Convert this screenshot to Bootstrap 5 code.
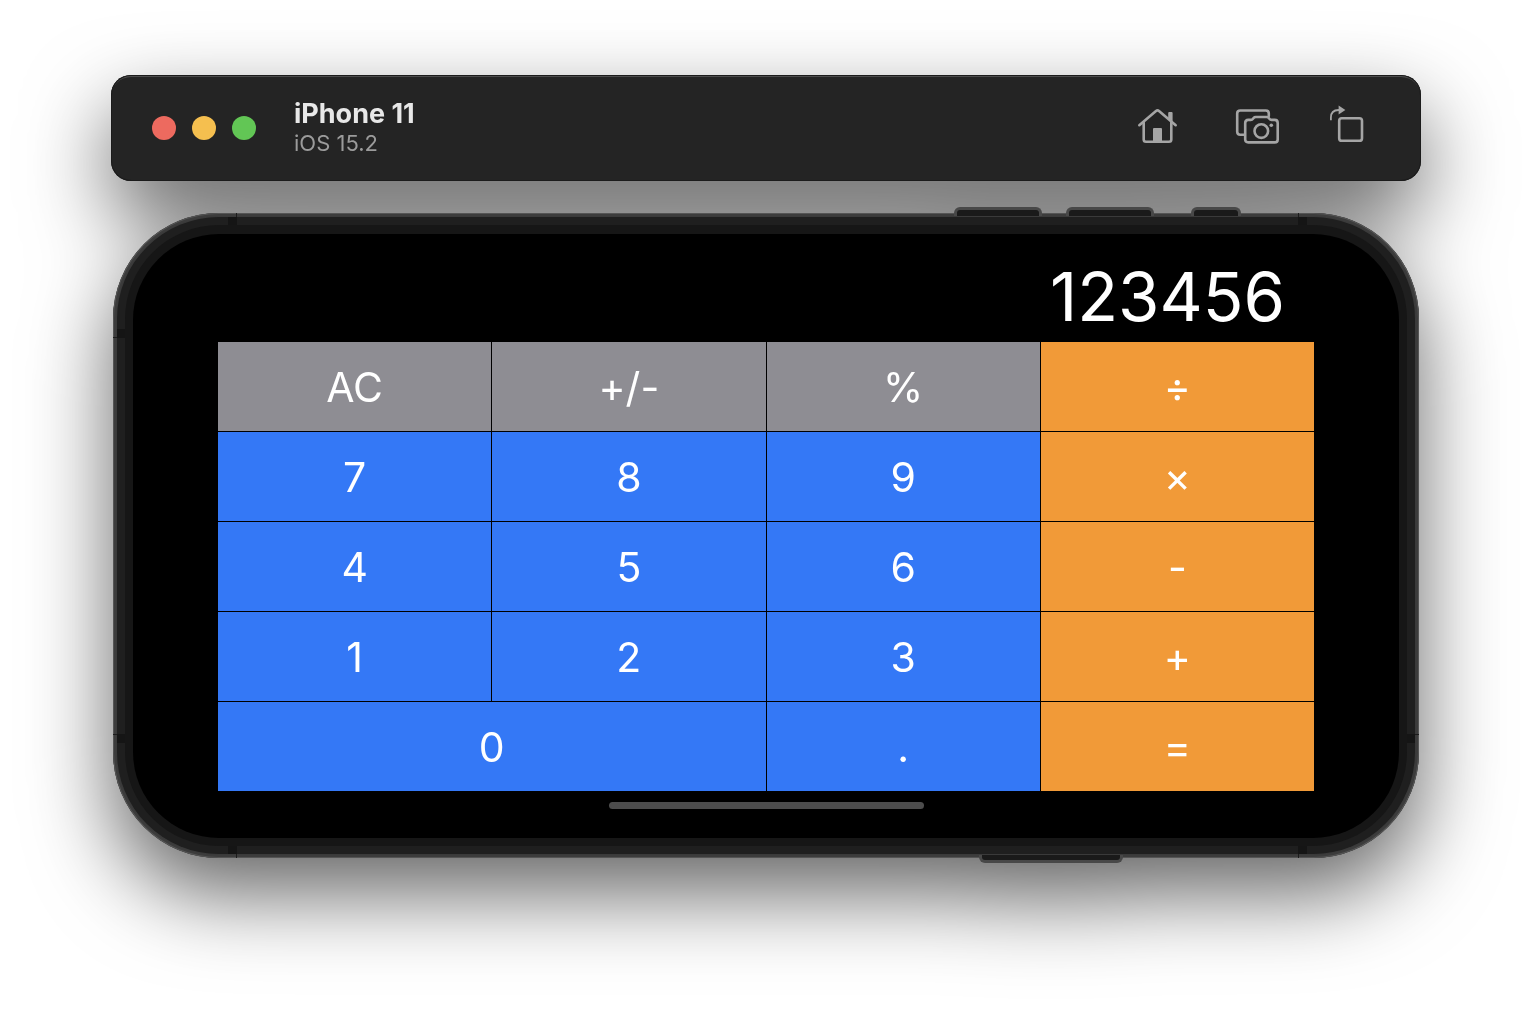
<!DOCTYPE html>
<html lang="en">
<head>
<meta charset="utf-8">
<meta name="viewport" content="width=device-width, initial-scale=1">
<title>iPhone 11 – iOS 15.2</title>
<link href="https://cdn.jsdelivr.net/npm/bootstrap@5.3.0/dist/css/bootstrap.min.css" rel="stylesheet">
<style>
  body { font-family: Inter, "Liberation Sans", sans-serif; background: #fff; }
  .simulator { max-width: 1358px; padding: 75px 24px 160px; filter: drop-shadow(0 36px 42px rgba(0, 0, 0, .6)); }

  .titlebar { min-height: 106px; padding: 0 45px 0 41px; background: #242424; border-radius: 20px;
    box-shadow: inset 0 0 0 1px #1b1b1b, inset 0 2px 0 #4c4c4c; }
  .lights { gap: 16px; margin-right: 38px; }
  .light { width: 24px; height: 24px; }
  .light-close { background: #ed6a5f; }
  .light-min { background: #f5bf4f; }
  .light-zoom { background: #62c655; }
  .device-name { font-size: 27px; line-height: 30px; color: #e8e8e8; }
  .device-os { font-size: 22px; line-height: 28px; color: #9b9b9b; }
  .tools { gap: 48px; }
  .tool { color: #a5a5a5; }
  .tool svg { display: block; width: 48px; height: 48px; fill: none; stroke: currentColor; stroke-width: 2.6; stroke-linecap: round; stroke-linejoin: round; }
  .tool .solid { fill: currentColor; stroke: none; }

  .phone { margin: 32px 2px 0; padding: 4px; background: #3a3a3a; border-radius: 106px;
    box-shadow: inset 0 0 0 1px #555, inset 0 0 0 3px #3c3c3c; }
  .frame { padding: 8px; background: #1f1f1f; border-radius: 102px; }
  .bezel { padding: 9px 8px 8px; background: #161616; border-radius: 94px; }
  .screen { padding: 0 85px 29px; background: #000; border-radius: 86px; }

  .readout { padding: 17px 29px 0 0; font-size: 67px; line-height: 91px; color: #fff; }
  .keypad { grid-template-columns: repeat(4, 1fr); grid-auto-rows: 89px; gap: 1px; }
  .key { --bs-btn-color: #fff; --bs-btn-hover-color: #fff; --bs-btn-active-color: #fff; font-size: 41px; line-height: 48px;
    --bs-btn-bg: #3478f6; --bs-btn-hover-bg: #4a87f8; --bs-btn-active-bg: #2a66d8; }
  .key-fn { --bs-btn-bg: #8e8d93; --bs-btn-hover-bg: #9d9ca2; --bs-btn-active-bg: #7b7a80; }
  .key-op { --bs-btn-bg: #f19a38; --bs-btn-hover-bg: #f5a850; --bs-btn-active-bg: #d98527; }
  .key-zero { grid-column: span 2; }
  .home-bar { width: 315px; height: 7px; margin-top: 11px; background: #4d4d4d; }

  /* hardware buttons sit on the rim of the phone */
  .rim { position: absolute; background: #1a1a1a; border: 3px solid #484848; }
  .rim-top { top: -6px; height: 9px; border-bottom: 0; border-radius: 6px 6px 0 0; }
  .rim-bottom { bottom: -5px; height: 8px; border-top: 0; border-radius: 0 0 6px 6px; }
  .vol-down { right: 377px; width: 88px; }
  .vol-up { right: 265px; width: 88px; }
  .mute { right: 178px; width: 50px; }
  .power { right: 296px; width: 144px; }
  /* antenna breaks in the metal band, each with a seam across the rim */
  .antenna { position: absolute; background: #151515; }
  .antenna::after { content: ""; position: absolute; background: #1c1c1c; }
  .antenna-v { width: 9px; height: 8px; }
  .antenna-v::after { width: 1px; height: 4px; }
  .antenna-h { width: 8px; height: 9px; }
  .antenna-h::after { width: 4px; height: 1px; }
  .at-top { top: 4px; }
  .at-top::after { top: -4px; }
  .at-bottom { bottom: 4px; }
  .at-bottom::after { bottom: -4px; }
  .at-left { left: 4px; }
  .at-left::after { left: -4px; }
  .at-right { right: 4px; }
  .at-right::after { right: -4px; }
  .from-left { left: 115px; }
  .from-left::after { right: 0; }
  .from-right { right: 112px; }
  .from-right::after { left: 0; }
  .from-top { top: 116px; }
  .from-top::after { bottom: 0; }
  .from-bottom { bottom: 115px; }
  .from-bottom::after { top: 0; }
</style>
</head>
<body>
<main class="simulator container-fluid">
  <header class="titlebar d-flex align-items-center">
    <div class="lights d-flex">
      <button type="button" class="light light-close btn p-0 border-0 rounded-circle" aria-label="Close"></button>
      <button type="button" class="light light-min btn p-0 border-0 rounded-circle" aria-label="Minimize"></button>
      <button type="button" class="light light-zoom btn p-0 border-0 rounded-circle" aria-label="Zoom"></button>
    </div>
    <div class="me-auto">
      <h1 class="device-name fw-bold m-0">iPhone 11</h1>
      <p class="device-os m-0">iOS 15.2</p>
    </div>
    <div class="tools d-flex">
      <button type="button" class="tool btn p-0 border-0" aria-label="Home">
        <svg viewBox="0 0 48 48" aria-hidden="true">
          <path d="M3.3 21.2 20 6.9q1.5-1.2 3 0L39.7 21.2"/>
          <path d="M7.7 18.5V35.5q0 2.3 2.3 2.3H33q2.3 0 2.3-2.3V18.5"/>
          <path class="solid" d="M32.2 14V9q0-1 1-1h2.4q1 0 1 1v9zM17 38V25q0-1 1-1h7q1 0 1 1v13z"/>
        </svg>
      </button>
      <button type="button" class="tool btn p-0 border-0" aria-label="Screenshot">
        <svg viewBox="0 0 48 48" aria-hidden="true">
          <path d="M12 30.8H8.2q-3 0-3-3V9.5q0-3 3-3H33.8q3 0 3 3V12"/>
          <path d="M16.2 15.9h2.6q1.4 0 2.2-1.1l.6-.8q.8-1 2.2-1h10.8q1.4 0 2.2 1l.6.8q.8 1.1 2.2 1.1h3.1q3 0 3 3V35.4q0 3-3 3H16.2q-3 0-3-3V18.9q0-3 3-3z"/>
          <circle cx="29.3" cy="27.1" r="6.8"/>
          <circle class="solid" cx="39.3" cy="21.2" r="1.8"/>
        </svg>
      </button>
      <button type="button" class="tool btn p-0 border-0" aria-label="Rotate">
        <svg viewBox="0 0 48 48" aria-hidden="true">
          <rect x="11.2" y="14.2" width="22.8" height="22.6" rx="2.6"/>
          <path stroke-width="1.8" stroke-linecap="butt" d="M2.9 16.3V13.6Q2.9 6 10.6 6H12"/>
          <path class="solid" d="M10.6 1.4 17.4 5.9 10.6 10.6z"/>
        </svg>
      </button>
    </div>
  </header>

  <section class="phone position-relative" aria-label="Calculator">
    <span class="rim rim-top vol-down"></span>
    <span class="rim rim-top vol-up"></span>
    <span class="rim rim-top mute"></span>
    <span class="rim rim-bottom power"></span>
    <div class="frame">
      <span class="antenna antenna-v at-top from-left"></span>
      <span class="antenna antenna-v at-top from-right"></span>
      <span class="antenna antenna-v at-bottom from-left"></span>
      <span class="antenna antenna-v at-bottom from-right"></span>
      <span class="antenna antenna-h at-left from-top"></span>
      <span class="antenna antenna-h at-left from-bottom"></span>
      <span class="antenna antenna-h at-right from-bottom"></span>
      <div class="bezel">
        <div class="screen">
          <output class="readout d-block text-end">123456</output>
          <div class="keypad d-grid">
            <button type="button" class="key key-fn btn p-0 border-0 rounded-0">AC</button>
            <button type="button" class="key key-fn btn p-0 border-0 rounded-0">+/-</button>
            <button type="button" class="key key-fn btn p-0 border-0 rounded-0">%</button>
            <button type="button" class="key key-op btn p-0 border-0 rounded-0">÷</button>
            <button type="button" class="key btn p-0 border-0 rounded-0">7</button>
            <button type="button" class="key btn p-0 border-0 rounded-0">8</button>
            <button type="button" class="key btn p-0 border-0 rounded-0">9</button>
            <button type="button" class="key key-op btn p-0 border-0 rounded-0">×</button>
            <button type="button" class="key btn p-0 border-0 rounded-0">4</button>
            <button type="button" class="key btn p-0 border-0 rounded-0">5</button>
            <button type="button" class="key btn p-0 border-0 rounded-0">6</button>
            <button type="button" class="key key-op btn p-0 border-0 rounded-0">-</button>
            <button type="button" class="key btn p-0 border-0 rounded-0">1</button>
            <button type="button" class="key btn p-0 border-0 rounded-0">2</button>
            <button type="button" class="key btn p-0 border-0 rounded-0">3</button>
            <button type="button" class="key key-op btn p-0 border-0 rounded-0">+</button>
            <button type="button" class="key key-zero btn p-0 border-0 rounded-0">0</button>
            <button type="button" class="key btn p-0 border-0 rounded-0">.</button>
            <button type="button" class="key key-op btn p-0 border-0 rounded-0">=</button>
          </div>
          <div class="home-bar rounded-pill mx-auto"></div>
        </div>
      </div>
    </div>
  </section>
</main>
<script src="https://cdn.jsdelivr.net/npm/bootstrap@5.3.0/dist/js/bootstrap.bundle.min.js"></script>
</body>
</html>
